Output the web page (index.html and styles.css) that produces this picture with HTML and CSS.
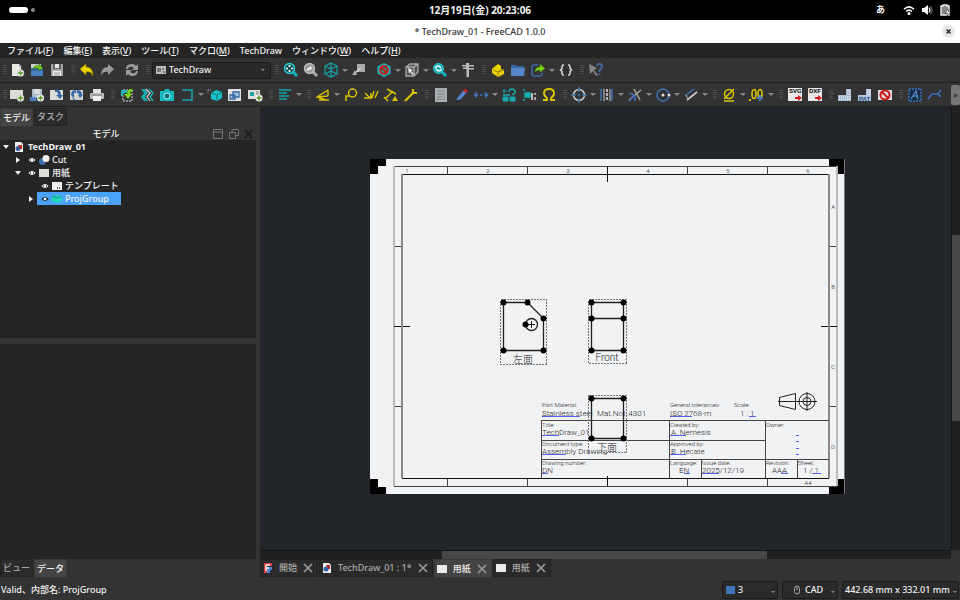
FILE: index.html
```html
<!DOCTYPE html>
<html lang="ja">
<head>
<meta charset="utf-8">
<title>* TechDraw_01 - FreeCAD 1.0.0</title>
<link rel="stylesheet" href="styles.css">
</head>
<body>
<header class="shell">
  <div class="shell-side"><span class="pill"></span><span class="dot"></span></div>
  <time class="clock">12月19日(金) 20:23:06</time>
  <div class="shell-side shell-end">
    <span class="ime">あ</span>
    <svg viewBox="0 0 12 12"><path d="M1 5.2Q6 .6 11 5.2M3 7.5Q6 4.8 9 7.5" fill="none" stroke="#fff" stroke-width="1.5"/><circle cx="6" cy="9.4" r="1.5" fill="#fff"/></svg>
    <svg viewBox="0 0 12 12"><path d="M1 4h2l4-3v10L3 8H1z" fill="#fff"/><path d="M8 3.5q1.8 2.5 0 5" fill="none" stroke="#fff" stroke-width="1.2"/><path d="M9.6 2q2.6 4 0 8" fill="none" stroke="#666" stroke-width="1.2"/></svg>
    <svg viewBox="0 0 12 12"><path d="M2 2h2V1h4v1h2v9H2z" fill="#888" stroke="#eee" stroke-width="1.4"/><path d="M9 5L6 9h2.500L8 12l4-4H9.500z" fill="#fff" stroke="#000" stroke-width=".5"/></svg>
  </div>
</header>
<div class="titlebar"><h1>* TechDraw_01 - FreeCAD 1.0.0</h1><button class="win-close" aria-label="閉じる"><svg viewBox="0 0 13 13"><path d="M4.500 4.500l4 4M8.500 4.500l-4 4" stroke="#222" stroke-width="1.400"/></svg></button></div>
<nav class="menubar">
  <button>ファイル(<u>F</u>)</button><button>編集(<u>E</u>)</button><button>表示(<u>V</u>)</button><button>ツール(<u>T</u>)</button><button>マクロ(<u>M</u>)</button><button>TechDraw</button><button>ウィンドウ(<u>W</u>)</button><button>ヘルプ(<u>H</u>)</button>
</nav>

<div class="toolbar" role="toolbar" aria-label="標準">
  <i class="handle first"></i>
  <button class="tool" aria-label="新規"><svg viewBox="0 0 16 16"><path d="M3 2h7l2 2v10H3z" fill="#e9e9e2"/><path d="M10 2v3h3z" fill="#aaa"/><circle cx="11.5" cy="11" r="3.5" fill="#f4f4f4" stroke="#aaa" stroke-width=".5"/><path d="M11.500 8.500v5M9 11h5" stroke="#5c9a2c" stroke-width="1.5"/></svg></button>
  <button class="tool" aria-label="開く"><svg viewBox="0 0 16 16"><path d="M2 2h10v7H2z" fill="#c9cdc9"/><path d="M2 6h12v8H2z" fill="#3465a4"/><path d="M2 9h12v5H2z" fill="#4a7fc0"/><path d="M4 7q2-5 6-3V2l4 4-4 3V7Q7 5 4 7z" fill="#6cc21a" stroke="#2f6c0c" stroke-width=".5"/></svg></button>
  <button class="tool" aria-label="保存"><svg viewBox="0 0 16 16"><rect x="2" y="2" width="12" height="12" rx="1" fill="#a5a7a5"/><path d="M4 2h8v5H4z" fill="#626766"/><path d="M6 2h4v4H6z" fill="#e5e5e5"/><path d="M4 9h8v5H4z" fill="#eee"/><path d="M5 11h6M5 13h6" stroke="#999"/></svg></button>
  <i class="handle"></i>
  <button class="tool" aria-label="元に戻す"><svg viewBox="0 0 16 16"><path d="M1 7l6-5v3q7 0 7 9-2-5-7-4v3z" fill="#edd400" stroke="#9b7500" stroke-width=".6"/></svg></button>
  <button class="tool" aria-label="やり直し"><svg viewBox="0 0 16 16"><path d="M15 7L9 2v3q-7 0-7 9 2-5 7-4v3z" fill="#999b99"/></svg></button>
  <i class="sep"></i>
  <button class="tool" aria-label="更新"><svg viewBox="0 0 16 16"><path d="M2 7q0-5 6-5 3 0 4 2l2-2v6H8l2-2Q5 3 4 7zM14 9q0 5-6 5-3 0-4-2l-2 2V8h6l-2 2q5 3 6-1z" fill="#9a9c9a"/></svg></button>
  <i class="handle"></i>
  <div class="workbench"><svg viewBox="0 0 12 12"><path d="M1 2h10v8H1z" fill="#bbb"/><path d="M2 4h4v4H2zM7 4h2v2H7zM8 7h2v2H8z" fill="#777"/></svg><select aria-label="ワークベンチ"><option>TechDraw</option></select><b class="caret"></b></div>
  <i class="handle"></i>
  <button class="tool" aria-label="全体表示"><svg viewBox="0 0 16 16"><path d="M9.500 9.500l4.500 4.500" stroke="#16b9c0" stroke-width="3"/><circle cx="6.500" cy="6.500" r="5" fill="#164d50" stroke="#20d0d5" stroke-width="1.5"/><path d="M6.500 3v2M6.500 8v2M3 6.500h2M8 6.500h2" stroke="#fff" stroke-width="1.700"/></svg></button>
  <button class="tool" aria-label="選択に合わせる"><svg viewBox="0 0 16 16"><path d="M9.500 9.500l4.500 4.500" stroke="#aaa" stroke-width="3"/><circle cx="6.500" cy="6.500" r="5" fill="#999" stroke="#bbb" stroke-width="1.500"/><path d="M4 9V7l4-3 1 3z" fill="#eee"/></svg></button>
  <button class="tool menu" aria-label="アイソメトリック"><svg viewBox="0 0 16 16"><path d="M8 1l6 3v8l-6 3-6-3V4zM2 4l6 3 6-3M8 7v8M2 12l6-3 6 3M8 1v8" fill="none" stroke="#16a5aa" stroke-width="1.2"/></svg><b class="caret"></b></button>
  <button class="tool" aria-label="移動"><svg viewBox="0 0 16 16"><path d="M6 2h8v8H6z" fill="#aaa"/><path d="M10 6L4 11" stroke="#ddd" stroke-width="1.500"/><path d="M1 13l3-5 2 5z" fill="#aaa"/></svg></button>
  <i class="sep"></i>
  <button class="tool menu" aria-label="表示スタイル"><svg viewBox="0 0 16 16"><path d="M8 1l6.500 3.500v7L8 15l-6.500-3.500v-7z" fill="#1bb7be"/><circle cx="8" cy="8" r="4" fill="#2b8286" stroke="#cc1515" stroke-width="1.800"/><path d="M5 5l6 6" stroke="#cc1515" stroke-width="1.800"/></svg><b class="caret"></b></button>
  <button class="tool menu" aria-label="選択"><svg viewBox="0 0 16 16"><path d="M2 5l4-3h8v8l-4 4H2zM2 5h8v9M10 5l4-3" fill="#505050" stroke="#aaa" stroke-width="1.300"/><path d="M4 6l5 2-2 1 3 3-1 1-3-3-1 2z" fill="#eee"/></svg><b class="caret"></b></button>
  <button class="tool menu" aria-label="リンク"><svg viewBox="0 0 16 16"><path d="M9.500 9.500l4.500 4.500" stroke="#16b9c0" stroke-width="3"/><circle cx="6.500" cy="6.500" r="5" fill="#19a7ad" stroke="#20d0d5"/><path d="M3 6q3-4 6 0M10 7q-3 4-6 0" fill="none" stroke="#e8ffff" stroke-width="1.400"/></svg><b class="caret"></b></button>
  <button class="tool" aria-label="計測"><svg viewBox="0 0 16 16"><path d="M2 3h4V1h3v2h5v1.500H9V6h5v1.500H9V15H6.500V7H3V5.500h3V4.500H2z" fill="#bbb"/></svg></button>
  <i class="handle"></i>
  <button class="tool" aria-label="パーツ"><svg viewBox="0 0 16 16"><path d="M3 6l5-4 3 2v3l3 1v4l-6 3-6-4V7z" fill="#edd400"/><path d="M3 8l5 2 3-3M8 10v4M8 10l6-2" fill="none" stroke="#9b8500"/></svg></button>
  <button class="tool" aria-label="グループ"><svg viewBox="0 0 16 16"><path d="M1 3h5l1 1h7v10H1z" fill="#3465a4"/><path d="M1 6h14l-1 8H1z" fill="#5587c8"/></svg></button>
  <button class="tool menu" aria-label="リンク作成"><svg viewBox="0 0 16 16"><path d="M8 3H4Q2 3 2 5v7q0 2 2 2h6q2 0 2-2v-1" fill="none" stroke="#3d6da8" stroke-width="1.500"/><path d="M5 10q0-5 5-5V2l5 4.500-5 4V8Q7 8 5 10z" fill="#7bd31d" stroke="#3b7a0d" stroke-width=".5"/></svg><b class="caret"></b></button>
  <button class="tool" aria-label="変数セット"><svg viewBox="0 0 16 16"><path d="M6 3H5Q4 3 4 5v1.500L2.500 8 4 9.500V11q0 2 1 2h1M10 3h1q1 0 1 2v1.500L13.500 8 12 9.500V11q0 2-1 2h-1" fill="none" stroke="#ddd" stroke-width="1.500"/></svg></button>
  <i class="handle"></i>
  <button class="tool" aria-label="ヘルプ"><svg viewBox="0 0 16 16"><path d="M1 2l8 4-3 2 4 5-2 1-3-5-3 3z" fill="#858585"/><path d="M9 4q0-2 2.500-2T14 4.500q0 2-2.500 3V10M11.500 11v2" fill="none" stroke="#43699d" stroke-width="1.800"/></svg></button>
</div>

<div class="toolbar second" role="toolbar" aria-label="TechDraw">
  <i class="handle first"></i>
  <button class="tool" aria-label="ページ"><svg viewBox="0 0 16 16"><path d="M1 3h13v9H1z" fill="#ddddd7"/><circle cx="11.500" cy="11" r="3.500" fill="#f4f4f4" stroke="#aaa" stroke-width=".5"/><path d="M11.500 8.500v5M9 11h5" stroke="#5c9a2c" stroke-width="1.500"/></svg></button>
  <button class="tool" aria-label="テンプレート"><svg viewBox="0 0 16 16"><path d="M3 2h10v9H3z" fill="#aabbcd"/><path d="M1 10h5l2 4H1z" fill="#4b82c5"/><path d="M5 2h6v5H5z" fill="#d9dde0"/><circle cx="11.500" cy="11" r="3.500" fill="#f4f4f4"/><path d="M11.500 8.500v5M9 11h5" stroke="#5c9a2c" stroke-width="1.500"/></svg></button>
  <button class="tool" aria-label="再描画"><svg viewBox="0 0 16 16"><path d="M1 3h13v10H1z" fill="#dcdcd6"/><path d="M6 3q6-1 6 5h2l-3 4-4-4h2q0-4-3-3z" fill="#346aa9"/></svg></button>
  <button class="tool" aria-label="全て再描画"><svg viewBox="0 0 16 16"><path d="M1 3h13v10H1z" fill="#d4d4ce"/><path d="M2 8q0-5 5-5v3H5v5M8 3q5 0 5 5h1l-3 3-2-3h1q0-2-2-2zM8 14q-4 0-5-4" fill="#346aa9"/></svg></button>
  <button class="tool" aria-label="印刷"><svg viewBox="0 0 16 16"><path d="M4 2h8v5H4z" fill="#e2e2e2"/><rect x="1" y="6" width="14" height="6" rx="1" fill="#bdbdbd"/><path d="M4 9h8v5H4z" fill="#eee"/><path d="M3 8h10" stroke="#777"/></svg></button>
  <i class="handle"></i>
  <button class="tool" aria-label="ビュー"><svg viewBox="0 0 16 16"><path d="M4 3h9v11H4z" fill="none" stroke="#ddd" stroke-dasharray="2 1"/><path d="M2 3h6v3H4v3H2z" fill="#18b7ba"/><path d="M13 2q-5 0-5 5H5l4 5 4-5h-2q0-3 3-3z" fill="#7bd31d"/></svg></button>
  <button class="tool" aria-label="破断ビュー"><svg viewBox="0 0 16 16"><path d="M2 2h4l3 4-3 4 3 4H5l-3-4 3-4z" fill="#16a8ae"/><path d="M7 2l4 4-3 4 3 4" fill="none" stroke="#ddd" stroke-width="1.200"/><path d="M10 2l4 4-3 4 3 4" fill="none" stroke="#18b8bd" stroke-width="1.300"/></svg></button>
  <button class="tool" aria-label="アクティブビュー"><svg viewBox="0 0 16 16"><path d="M1 4h4l1-2h4l1 2h4v10H1z" fill="#18b9be"/><circle cx="8" cy="9" r="3" fill="#0b6f75" stroke="#aef"/></svg></button>
  <button class="tool menu" aria-label="断面図"><svg viewBox="0 0 16 16"><path d="M3 3h10v10H3" fill="none" stroke="#16a6ab" stroke-width="1.600"/></svg><b class="caret"></b></button>
  <button class="tool" aria-label="投影グループ"><svg viewBox="0 0 16 16"><path d="M4 6l5-3 6 2v6l-5 3-6-2z" fill="#17c1c7"/><path d="M4 6l6 2 5-3M10 8v6" fill="none" stroke="#09777d"/><path d="M1 3h4M1 3v4" stroke="#aaa" stroke-dasharray="1 1"/></svg></button>
  <button class="tool" aria-label="クリップグループ"><svg viewBox="0 0 16 16"><path d="M1 2h13v12H1z" fill="#e0e2e4"/><path d="M3 8h5v4H3zM6 5h6v5H6z" fill="#b9cbe2" stroke="#3167a5" stroke-width="1.300"/></svg></button>
  <button class="tool" aria-label="シンボル"><svg viewBox="0 0 16 16"><path d="M1 3h12v9H1z" fill="#e0e0da"/><path d="M3 5h4v4H3z" fill="#18a5a9"/><path d="M9 5h3M9 7h3" stroke="#777"/><circle cx="12" cy="11" r="3.500" fill="#f4f4f4"/><path d="M12 8.500v5M9.500 11h5" stroke="#5c9a2c" stroke-width="1.500"/></svg></button>
  <i class="handle"></i>
  <button class="tool menu" aria-label="積み重ね"><svg viewBox="0 0 16 16"><path d="M2 3h12M2 6h8M2 9h10M2 12h8" stroke="#17a5a9" stroke-width="1.700"/></svg><b class="caret"></b></button>
  <i class="handle"></i>
  <button class="tool menu" aria-label="寸法"><svg viewBox="0 0 16 16"><path d="M13 3L2 10l9 3M2 10l11-1M13 3v6M4 13h10" fill="none" stroke="#dcc500" stroke-width="1.400"/></svg><b class="caret"></b></button>
  <button class="tool" aria-label="バルーン"><svg viewBox="0 0 16 16"><circle cx="9.500" cy="6" r="4" fill="none" stroke="#dcc500" stroke-width="1.500"/><path d="M7 9H3v5M3 9v3" fill="none" stroke="#dcc500" stroke-width="1.500"/></svg></button>
  <button class="tool" aria-label="軸測長さ"><svg viewBox="0 0 16 16"><path d="M2 6l5 5M1 11h7V6M9 11l2-7M12 11l3-7" fill="none" stroke="#dcc500" stroke-width="1.400"/></svg></button>
  <button class="tool" aria-label="ランドマーク寸法"><svg viewBox="0 0 16 16"><path d="M4 2l9 5M2 12l8-8M1 10l4 4" fill="none" stroke="#dcc500" stroke-width="1.500"/><path d="M9 14l3-5 3 5z" fill="#dcc500"/></svg></button>
  <button class="tool" aria-label="寸法修復"><svg viewBox="0 0 16 16"><path d="M2 14l8-8M10 2v4h4" fill="none" stroke="#dcc500" stroke-width="2.200"/></svg></button>
  <i class="handle"></i>
  <button class="tool" aria-label="注釈"><svg viewBox="0 0 16 16"><path d="M2 1h12v14H2z" fill="#a9afb0"/><path d="M4 4h8M4 7h8M4 10h8M4 12.500h8" stroke="#7d8789"/></svg></button>
  <button class="tool" aria-label="リッチ注釈"><svg viewBox="0 0 16 16"><path d="M3 14l2-4 6-7 3 2-6 7z" fill="#5586ca"/><path d="M10 4l2-2 3 2-2 2z" fill="#c92525"/><path d="M3 14h5" stroke="#222"/></svg></button>
  <button class="tool menu" aria-label="引出線"><svg viewBox="0 0 16 16"><path d="M1 8h4M7 8h2M11 8h4M4 5.500L1.500 8 4 10.500M12 5.500L14.500 8 12 10.500" fill="none" stroke="#4375b8" stroke-width="1.500"/></svg><b class="caret"></b></button>
  <button class="tool" aria-label="面ビュー"><svg viewBox="0 0 16 16"><path d="M2 4h4M3 2v4M2 10h5v4H2zM9 10h5v4H9z" fill="#17aaae" stroke="#17aaae"/><path d="M8 5q0-3 3-3t3 3-3 2M2 8h7" fill="none" stroke="#17aaae" stroke-width="1.500"/></svg></button>
  <button class="tool" aria-label="溶接"><svg viewBox="0 0 16 16"><path d="M2 3h2M2 13h2M4 6h5v4H4z" stroke="#17aaae" fill="#17b9be" stroke-width="1.500"/><path d="M10 6h2v7h-2z" fill="#bbb"/><path d="M14 6v2M14 10v3" stroke="#aaa" stroke-width="2"/></svg></button>
  <button class="tool" aria-label="表面仕上げ"><svg viewBox="0 0 16 16"><path d="M2 13h4v-2Q3 9 3 6q0-4 5-4t5 4q0 3-3 5v2h4" fill="none" stroke="#ddc600" stroke-width="1.900"/></svg></button>
  <i class="handle"></i>
  <button class="tool menu" aria-label="中心線"><svg viewBox="0 0 16 16"><circle cx="8" cy="8" r="5.500" fill="none" stroke="#ccc" stroke-width="1.500"/><path d="M8 0v5M8 7v2M8 11v5M0 8h5M7 8h2M11 8h5" stroke="#3e70b2" stroke-width="1.500"/></svg><b class="caret"></b></button>
  <button class="tool menu" aria-label="補助線"><svg viewBox="0 0 16 16"><path d="M2 2v12M13 2v12" stroke="#3e70b2" stroke-width="1.500"/><path d="M5 2v12M11 2v12" stroke="#999" stroke-width="1.500"/><path d="M8 2v12" stroke="#ddd" stroke-width="1.500" stroke-dasharray="3 1"/></svg><b class="caret"></b></button>
  <button class="tool menu" aria-label="交点"><svg viewBox="0 0 16 16"><path d="M2 13L14 3M7 2l6 11" stroke="#aaa" stroke-width="1.500"/><path d="M2 6q7 1 6 8M2 14l5-5" fill="none" stroke="#3e70b2" stroke-width="1.700"/></svg><b class="caret"></b></button>
  <button class="tool menu" aria-label="円"><svg viewBox="0 0 16 16"><circle cx="8" cy="8" r="6" fill="none" stroke="#3e70b2" stroke-width="1.400"/><circle cx="8" cy="8" r="1.500" fill="#ddd"/><circle cx="14" cy="8" r="1.500" fill="#ddd"/></svg><b class="caret"></b></button>
  <button class="tool menu" aria-label="平行線"><svg viewBox="0 0 16 16"><path d="M2 9l9-7" stroke="#3e70b2" stroke-width="1.500"/><path d="M4 13l10-8" stroke="#ccc" stroke-width="1.700"/><path d="M3 8l2 4" stroke="#aaa"/></svg><b class="caret"></b></button>
  <i class="handle"></i>
  <button class="tool menu" aria-label="直径記号"><svg viewBox="0 0 16 16"><circle cx="8" cy="7" r="4.500" fill="none" stroke="#dcc500" stroke-width="1.500"/><path d="M3 12L13 2M3 14h10" stroke="#dcc500" stroke-width="1.500"/></svg><b class="caret"></b></button>
  <button class="tool menu" aria-label="小数桁"><svg viewBox="0 0 16 16"><path d="M1 12v2" stroke="#dcc500" stroke-width="2"/><ellipse cx="5" cy="7" rx="2" ry="4.500" fill="none" stroke="#dcc500" stroke-width="1.600"/><ellipse cx="11" cy="6.500" rx="2" ry="4" fill="none" stroke="#dcc500" stroke-width="1.600"/><path d="M11 8v6M8 11h6" stroke="#4779bd" stroke-width="2.200"/></svg><b class="caret"></b></button>
  <i class="handle"></i>
  <button class="tool" aria-label="SVG出力"><svg viewBox="0 0 16 16"><path d="M1 1h14v13H1z" fill="#e8e8e8"/><path d="M8 10h3V8l4 3-4 3v-2H8z" fill="#d51c1c"/><text x="2" y="6">SVG</text></svg></button>
  <button class="tool" aria-label="DXF出力"><svg viewBox="0 0 16 16"><path d="M1 1h14v13H1z" fill="#e8e8e8"/><path d="M8 10h3V8l4 3-4 3v-2H8z" fill="#d51c1c"/><text x="2" y="6">DXF</text></svg></button>
  <i class="handle"></i>
  <button class="tool" aria-label="ハッチング"><svg viewBox="0 0 16 16"><path d="M1 8h8V2h5v12H1z" fill="#a5bad2"/><path d="M2 10h12M2 12.500h12M11 3v10M13 3v10" stroke="#eef1f5" stroke-dasharray="1 1"/></svg></button>
  <button class="tool" aria-label="幾何ハッチング"><svg viewBox="0 0 16 16"><path d="M1 8h8V2h5v12H1z" fill="#b5c7db"/><path d="M11 3v6M13 3v6" stroke="#eef1f5" stroke-dasharray="1 1"/><text class="pat" x="2" y="14">PAT</text></svg></button>
  <button class="tool" aria-label="フレーム切替"><svg viewBox="0 0 16 16"><path d="M1 3h14v10H1z" fill="#ddd"/><circle cx="8" cy="8" r="4.500" fill="none" stroke="#cc1818" stroke-width="2"/><path d="M5 5l6 6" stroke="#cc1818" stroke-width="2"/></svg></button>
  <i class="handle"></i>
  <button class="tool" aria-label="テキスト"><svg viewBox="0 0 16 16"><path d="M2 2h12v12H2z" fill="#172b43" stroke="#3973b9" stroke-width="1.500" stroke-dasharray="2 1"/><path d="M4 12l5-8 2 8M6 9h4" fill="none" stroke="#5389cd" stroke-width="1.300"/></svg></button>
  <button class="tool" aria-label="引出"><svg viewBox="0 0 16 16"><path d="M1 12l4-5h6l3-4M11 7l3 3" fill="none" stroke="#3973b9" stroke-width="1.600"/></svg></button>
  <button class="overflow" aria-label="その他">»</button>
</div>

<main class="work">
  <aside class="side">
    <div class="tabs"><button class="tab on">モデル</button><button class="tab">タスク</button></div>
    <div class="dock-title"><h2>モデル</h2><svg viewBox="0 0 42 12"><path d="M1.500 1.500h9v9h-9zM1.500 4h9" fill="none" stroke="#777"/><path d="M17.500 4.500h6v6h-6zM20 4V1.500h6.500v6H24" fill="none" stroke="#777"/><path d="M33 2l7 8M40 2l-7 8" stroke="#191919" stroke-width="1.500"/></svg></div>
    <div class="tree" role="tree">
      <div class="row" role="treeitem"><b class="twisty open"></b><span class="item root"><svg viewBox="0 0 12 12"><path d="M2 1h6l2 2v8H2z" fill="#eee"/><circle cx="5" cy="7.500" r="2.500" fill="#2d61a5"/><path d="M5 4h4v4H7z" fill="#b22"/></svg><strong>TechDraw_01</strong></span></div>
      <div class="row l1" role="treeitem"><b class="twisty"></b><span class="item"><svg class="eye" viewBox="0 0 8 8"><path d="M.8 4Q4 .8 7.200 4 4 7.200.8 4z" fill="none" stroke="#ddd"/><circle cx="4" cy="4" r="1.300" fill="#fff"/></svg><svg viewBox="0 0 12 12"><circle cx="4.500" cy="7.500" r="3.500" fill="#416fad"/><circle cx="8" cy="4.500" r="3.500" fill="#eee"/></svg>Cut</span></div>
      <div class="row l1" role="treeitem"><b class="twisty open"></b><span class="item"><svg class="eye" viewBox="0 0 8 8"><path d="M.8 4Q4 .8 7.200 4 4 7.200.8 4z" fill="none" stroke="#ddd"/><circle cx="4" cy="4" r="1.300" fill="#fff"/></svg><svg viewBox="0 0 12 12"><path d="M1 2h10v8H1z" fill="#deded8"/></svg>用紙</span></div>
      <div class="row l2" role="treeitem"><b class="twisty leaf"></b><span class="item"><svg class="eye" viewBox="0 0 8 8"><path d="M.8 4Q4 .8 7.200 4 4 7.200.8 4z" fill="none" stroke="#ddd"/><circle cx="4" cy="4" r="1.300" fill="#fff"/></svg><svg viewBox="0 0 12 12"><path d="M1 2h10v8H1z" fill="#eee"/><path d="M6 8h4" stroke="#666" stroke-width="2" stroke-dasharray="1 1"/></svg>テンプレート</span></div>
      <div class="row l2" role="treeitem"><b class="twisty"></b><span class="item selected"><svg class="eye" viewBox="0 0 8 8"><path d="M.8 4Q4 .8 7.200 4 4 7.200.8 4z" fill="#234" stroke="#234"/><circle cx="4" cy="4" r="1.300" fill="#fff"/></svg><svg viewBox="0 0 12 12"><path d="M1 3l5-1 5 1v5l-5 2-5-2z" fill="#22d5bc"/><path d="M1 3l5 2 5-2" fill="none" stroke="#188f91"/></svg>ProjGroup</span></div>
    </div>
    <div class="props"></div>
    <div class="tabs bottom"><button class="tab">ビュー</button><button class="tab on">データ</button></div>
  </aside>

  <section class="center">
    <div class="view">
      <div class="canvas">
        <svg class="sheet" viewBox="370 159 475 335" role="img" aria-label="図面">
          <path d="M370 159h475v335H370z" fill="#f1f2f4"/>
          <path d="M370 159h16v7h-8v8h-8zM845 159h-16v7h8v8h8zM370 494h16v-7h-8v-8h-8zM845 494h-16v-7h8v-8h8z"/>
          <g fill="none" stroke="#444" stroke-width="1" shape-rendering="crispEdges">
            <path d="M394 166.500h443M394 486.500h443M447.500 166v8M527.500 166v8M687.500 166v8M767.500 166v8M447.500 478v8M527.500 478v8M687.500 478v8M767.500 478v8M394 246.500h8M394 406.500h8M829 246.500h8M829 406.500h8"/>
            <path d="M394 166v320M837 166v320" stroke="#bbb" stroke-width="2"/>
            <path d="M402 174.500h427M402 478.500h427M607.500 166v16M607.500 476v10M394 326.500h16M821 326.500h16" stroke="#111"/>
            <path d="M402 174v304M829 174v304" stroke="#888" stroke-width="2"/>
            <path d="M844.500 159v335" stroke="#777"/>
            <path d="M541.500 478v-57.500H829M669.500 420v58M765.500 420v58M541 440.500h224M541 459.500h288M701.500 459v19M797.500 459v19"/>
          </g>
          <g class="zone"><text x="407" y="173">1</text><text x="488" y="173">2</text><text x="568" y="173">3</text><text x="648" y="173">4</text><text x="728" y="173">5</text><text x="808" y="173">6</text><text x="833" y="209">A</text><text x="833" y="289">B</text><text x="833" y="369">C</text><text x="833" y="449">D</text><text x="808" y="485">A4</text></g>
          <g class="small"><text x="542" y="407">Part Material:</text><text x="670" y="407">General tolerances:</text><text x="734" y="407">Scale:</text><text x="542" y="427">Title:</text><text x="670" y="427">Created by:</text><text x="766" y="427">Owner:</text><text x="542" y="446">Document type:</text><text x="670" y="446">Approved by:</text><text x="542" y="465">Drawing number:</text><text x="670" y="465">Language:</text><text x="702" y="465">Issue date:</text><text x="766" y="465">Revision:</text><text x="798" y="465">Sheet:</text></g>
          <g class="field"><text x="542" y="416">Stainless steel</text><text x="597" y="416">Mat.No.</text><text x="622" y="416">1.4301</text><text x="670" y="416">ISO 2768-m</text><text x="740" y="416">1 : 1</text><text x="542" y="435">TechDraw_01</text><text x="671" y="435">A. Nemesis</text><text x="542" y="454">Assembly Drawing</text><text x="671" y="454">B. Hecate</text><text x="542" y="473">DN</text><text x="679" y="473">EN</text><text x="702" y="473">2025/12/19</text><text x="772" y="473">AAA</text><text x="803" y="473">1 / 1</text></g>
          <path d="M542 416.500h38M670 416.500h22M749 416.500h7M542 435.500h17M670 435.500h16M542 454.500h24M670 454.500h16M542 473.500h6M684 473.500h6M702 473.500h17M781 473.500h7M812 473.500h9M796 435.500h3M796 441.500h3M796 448.500h3M796 454.500h3" stroke="#5360e8" shape-rendering="crispEdges"/>
          <g fill="none" stroke="#222"><path d="M779.500 397.500l16-4v16l-16-4zM778 401.500h39M807 392v19"/><circle cx="807" cy="401.500" r="8"/><circle cx="807" cy="401.500" r="4"/></g>
          <g fill="none" stroke="#777" stroke-dasharray="2 1" shape-rendering="crispEdges"><path d="M500.500 299.500h46v65h-46zM588.500 299.500h38v64h-38zM588.500 395.500h38v57h-38z"/></g>
          <g fill="none" stroke="#222" stroke-width="1.300"><path d="M503.500 302.500h24l16 16v32h-40zM591.500 302.500h32v48h-32zM591.500 318.500h32M591.500 398.500h32v40h-32z"/><circle cx="531.500" cy="324.500" r="6"/><path d="M528 324.500h7M531.500 321v7" stroke-width="1"/></g>
          <path d="M503.500 302.500h0M527.500 302.500h0M543.500 318.500h0M543.500 350.500h0M503.500 350.500h0M525.500 324.500h0M591.500 302.500h0M623.500 302.500h0M591.500 318.500h0M623.500 318.500h0M591.500 350.500h0M623.500 350.500h0M591.500 398.500h0M623.500 398.500h0M591.500 438.500h0M623.500 438.500h0" stroke="#000" stroke-width="6" stroke-linecap="round"/>
          <g class="caption"><text x="523" y="363">左面</text><text x="607" y="361">Front</text><text x="607" y="451">下面</text></g>
        </svg>
      </div>
      <div class="vscroll"><i></i></div>
      <div class="hscroll"><i></i></div>
      <div class="corner"></div>
    </div>
    <div class="tabs docs">
      <button class="tab"><svg viewBox="0 0 10 10"><path d="M1 0h8v3H4v7H1z" fill="#e23b42"/><path d="M4 4h5v3H7v3H4z" fill="#4b87d5"/><path d="M3 2h4M3 5h3M3 2v6" stroke="#fff" stroke-width="1.300"/></svg>開始<svg viewBox="0 0 10 10"><path d="M1 1l8 8M9 1L1 9" stroke="#999" stroke-width="1.700"/></svg></button>
      <button class="tab"><svg viewBox="0 0 10 10"><path d="M1 0h6l2 2v8H1z" fill="#eee"/><circle cx="4" cy="6" r="2.500" fill="#2d61a5"/><path d="M4 2h4v4H6z" fill="#b22"/></svg>TechDraw_01 : 1*<svg viewBox="0 0 10 10"><path d="M1 1l8 8M9 1L1 9" stroke="#999" stroke-width="1.700"/></svg></button>
      <button class="tab on"><svg viewBox="0 0 10 10"><path d="M0 1h10v8H0z" fill="#ecece8"/></svg>用紙<svg viewBox="0 0 10 10"><path d="M1 1l8 8M9 1L1 9" stroke="#999" stroke-width="1.700"/></svg></button>
      <button class="tab"><svg viewBox="0 0 10 10"><path d="M0 1h10v8H0z" fill="#ecece8"/></svg>用紙<svg viewBox="0 0 10 10"><path d="M1 1l8 8M9 1L1 9" stroke="#999" stroke-width="1.700"/></svg></button>
    </div>
  </section>
</main>

<footer class="status">
  <span class="message">Valid、内部名: ProjGroup</span>
  <button class="pick"><svg viewBox="0 0 10 10"><path d="M1 1h9v8H1z" fill="#4175b8"/></svg>3<b class="caret"></b></button>
  <button class="pick nav"><svg viewBox="0 0 10 10"><rect x="2.500" y="1" width="5" height="8" rx="2.500" fill="none" stroke="#aaa"/><path d="M5 2v3" stroke="#aaa"/></svg>CAD<b class="caret"></b></button>
  <button class="pick size">442.68 mm x 332.01 mm<b class="caret"></b></button>
</footer>
</body>
</html>
```
FILE: styles.css
```css
* { box-sizing: border-box; }

body {
  margin: 0;
  height: 100vh;
  display: flex;
  flex-direction: column;
  overflow: hidden;
  background: #333;
  color: #f2f2f2;
  font: 500 9px/12px "Noto Sans", "Noto Sans CJK JP", sans-serif;
}

button, select {
  margin: 0;
  padding: 0;
  border: 0;
  background: none;
  color: inherit;
  font: inherit;
  white-space: nowrap;
}

h1, h2 { margin: 0; font: inherit; }

svg { display: block; flex: none; }

/* Desktop bar */
.shell {
  display: grid;
  grid-template-columns: 1fr auto 1fr;
  align-items: center;
  flex: none;
  height: 20px;
  padding: 0 9px;
  background: #000;
}
.shell-side { display: flex; align-items: center; gap: 3px; }
.shell-end { justify-content: flex-end; gap: 6px; }
.shell-end svg { width: 12px; height: 12px; }
.pill { width: 19px; height: 6px; border-radius: 3px; background: #fff; }
.dot { width: 4px; height: 4px; border-radius: 2px; background: #888; }
.clock { font-weight: 700; font-size: 10px; }
.ime { margin-right: 12px; font-weight: 700; }

.titlebar {
  display: grid;
  grid-template-columns: 1fr auto 1fr;
  align-items: center;
  flex: none;
  height: 23px;
  padding: 0 5px;
  background: #fff;
  color: #333;
}
.titlebar h1 { grid-column: 2; }
.win-close {
  justify-self: end;
  width: 13px;
  height: 13px;
  border-radius: 50%;
  background: #e8e8e8;
}
.win-close svg { width: 13px; height: 13px; }

.menubar {
  display: flex;
  align-items: center;
  gap: 10px;
  flex: none;
  height: 15px;
  padding: 0 7px;
  background: #252525;
}

/* Toolbars */
.toolbar {
  display: flex;
  align-items: center;
  flex: none;
  height: 25px;
  border-bottom: 1px solid #202020;
  background: #333;
}
.second { height: 24px; }
.tool {
  display: flex;
  align-items: center;
  flex: none;
  width: 20px;
  height: 20px;
  padding: 0 2px;
}
.tool svg { width: 16px; height: 16px; }
.tool text { font: 700 6px "Liberation Sans", sans-serif; }
.tool .pat { fill: #254f86; }
.menu { width: 28px; gap: 3px; }
.sep { flex: none; width: 5px; }
.handle {
  flex: none;
  width: 4px;
  height: 10px;
  margin: 0 2px 0 4px;
  background: repeating-linear-gradient(#4c4c4c 0 1px, #333 1px 2px);
}
.first { margin: 0 0 0 3px; }
.caret {
  flex: none;
  border: 3px solid transparent;
  border-top-color: #888;
  border-bottom: 0;
}
.workbench {
  display: flex;
  align-items: center;
  width: 119px;
  height: 17px;
  padding: 0 5px 0 2px;
  border: 1px solid #1b1b1b;
  border-radius: 2px;
  background: #292929;
}
.workbench svg { width: 12px; height: 12px; }
.workbench select { flex: 1; padding-left: 2px; appearance: none; }
.workbench .caret { border-width: 2px; border-bottom: 0; }
.overflow {
  width: 9px;
  height: 20px;
  margin-left: auto;
  border-radius: 2px;
  background: #777;
  color: #222;
}

/* Work area */
.work { display: flex; flex: 1; min-height: 0; }
.side { display: flex; flex-direction: column; flex: none; width: 256px; padding-top: 1px; }
.tabs { display: flex; align-items: flex-start; flex: none; gap: 1px; }
.tab {
  display: flex;
  align-items: center;
  height: 18px;
  padding: 0 3px;
  border: 1px solid #222;
  background: #2a2a2a;
  color: #aaa;
}
.tab.on { height: 19px; border-color: #383838; background: #444; color: #f2f2f2; }
.side .tab { padding: 0 2px; }
.dock-title {
  display: grid;
  grid-template-columns: 1fr auto;
  align-items: center;
  justify-items: center;
  flex: none;
  height: 13px;
  padding-right: 2px;
}
.dock-title svg { width: 42px; height: 12px; }
.tree { flex: 198; background: #252525; }
.props { flex: 215; margin-top: 6px; background: #252525; }
.row { display: flex; align-items: center; height: 13px; }
.l1 { padding-left: 12px; }
.l2 { padding-left: 25px; }
.twisty { display: flex; justify-content: center; flex: none; width: 12px; }
.twisty::before {
  content: "";
  border: 3px solid transparent;
  border-left: 4px solid #eee;
  border-right: 0;
}
.twisty.open::before { border: 3px solid transparent; border-top: 4px solid #eee; border-bottom: 0; }
.twisty.leaf::before { border-color: transparent; }
.item { display: flex; align-items: center; gap: 2px; height: 13px; padding: 0 12px 0 4px; }
.item svg { width: 12px; height: 12px; }
.item .eye { width: 8px; height: 8px; }
.root { padding-left: 1px; gap: 3px; }
.selected { background: #4aa2f7; }

.center { display: flex; flex-direction: column; flex: 1; min-width: 0; margin-left: 4px; }
.view {
  display: grid;
  grid-template: 1fr 9px / 1fr 9px;
  flex: 1;
  min-height: 0;
  background: #22252a;
}
.canvas {
  display: flex;
  align-items: center;
  justify-content: center;
  min-height: 0;
  padding: 0 0 4px 3px;
}
.sheet { width: 475px; height: 335px; }
.sheet text { font-family: "Liberation Sans Narrow", Roboto, "Noto Sans CJK JP", sans-serif; font-weight: 300; fill: #222; }
.sheet .zone text { font-size: 6px; text-anchor: middle; }
.sheet .small text { font-size: 6px; }
.sheet .field text { font-size: 8px; }
.sheet .caption text { font-size: 10px; text-anchor: middle; }
.vscroll {
  display: grid;
  grid-template-rows: 128fr 185fr 129fr;
  border-left: 1px solid #151515;
  background: #202020;
}
.vscroll i { grid-row: 2; background: #484848; }
.hscroll {
  display: grid;
  grid-template-columns: 182fr 325fr 184fr;
  border-top: 1px solid #151515;
  background: #202020;
}
.hscroll i { grid-column: 2; background: #484848; }
.corner { background: #333; }
.docs .tab { gap: 6px; padding: 0 4px 0 2px; }
.docs svg { width: 10px; height: 10px; }
.docs { height: 20px; }
.bottom { height: 20px; }

/* Status bar */
.status {
  display: flex;
  align-items: center;
  gap: 4px;
  flex: none;
  height: 21px;
  padding: 0 1px;
}
.message { flex: 1; }
.pick {
  display: flex;
  align-items: center;
  gap: 3px;
  width: 56px;
  height: 18px;
  padding: 0 2px;
  border: 1px solid #1b1b1b;
  border-radius: 2px;
  background: #2a2a2a;
}
.pick svg { width: 10px; height: 10px; }
.pick .caret { margin: 4px 0 0 auto; border-width: 2px; border-bottom: 0; }
.nav { padding-left: 9px; }
.size { width: 117px; }
```
